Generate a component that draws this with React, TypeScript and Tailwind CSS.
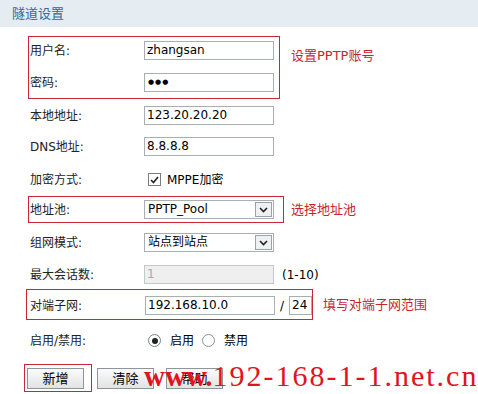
import React from "react";

const font = { fontFamily: '"DejaVu Sans", "Noto Sans CJK SC", sans-serif' };

function TextInput({ value, className = "" }: { value: string; className?: string }) {
  return (
    <div
      className={`h-[19px] w-[130px] border border-[#a9aeb3] bg-white pl-[2px] text-[12px] leading-[17px] text-black ${className}`}
    >
      {value}
    </div>
  );
}

function Select({ value }: { value: string }) {
  return (
    <div className="flex h-[19px] w-[130px] items-center justify-between border border-[#a9aeb3] bg-white pl-[3px] text-[12px] leading-[17px] text-black">
      <span>{value}</span>
      <div className="mr-[1px] flex h-[15px] w-[17px] items-center justify-center border border-[#9aa3ab] bg-[#eef0f2]">
        <svg width="9" height="6" viewBox="0 0 9 6">
          <path d="M1 1 L4.5 4.5 L8 1" fill="none" stroke="#222" strokeWidth="1.6" />
        </svg>
      </div>
    </div>
  );
}

function Label({ children, w = "w-[115px]" }: { children: React.ReactNode; w?: string }) {
  return <div className={`${w} shrink-0 text-[12px] text-[#222]`}>{children}</div>;
}

function Note({ children }: { children: React.ReactNode }) {
  return <div className="text-[13px] text-[#c8242f]">{children}</div>;
}

function Button({ children }: { children: React.ReactNode }) {
  return (
    <div className="flex h-[21px] w-[57px] items-center justify-center border border-[#8d949a] bg-gradient-to-b from-[#fbfbfb] to-[#e3e3e3] text-[13px] text-black">
      {children}
    </div>
  );
}

export default function App() {
  return (
    <div className="relative h-[394px] w-[478px] overflow-hidden bg-white" style={font}>
      {/* header */}
      <div className="flex h-[27px] items-center bg-[#e5ecf2] pl-[12px] text-[13px] text-[#2f6a9c]">
        隧道设置
      </div>

      {/* account box */}
      <div className="mt-[9px] flex items-center">
        <div className="ml-[28px] flex w-[252px] flex-col gap-[13px] border border-[#c8273a] pt-[4px] pb-[6px]">
          <div className="flex h-[19px] items-center pl-[1px]">
            <Label w="w-[114px]">用户名:</Label>
            <TextInput value="zhangsan" />
          </div>
          <div className="flex h-[19px] items-center pl-[1px]">
            <Label w="w-[114px]">密码:</Label>
            <TextInput value="●●●" className="pl-[3px] !text-[7px] !leading-[17px] tracking-[1px]" />
          </div>
        </div>
        <div className="ml-[11px] -mt-[24px]">
          <Note>设置PPTP账号</Note>
        </div>
      </div>

      <div className="ml-[30px] mt-[7px] flex h-[19px] items-center">
        <Label w="w-[114px]">本地地址:</Label>
        <TextInput value="123.20.20.20" />
      </div>
      <div className="ml-[30px] mt-[12px] flex h-[19px] items-center">
        <Label w="w-[114px]">DNS地址:</Label>
        <TextInput value="8.8.8.8" />
      </div>
      <div className="ml-[30px] mt-[14px] flex h-[19px] items-center">
        <Label w="w-[114px]">加密方式:</Label>
        <div className="ml-[4px] flex items-center gap-[6px] text-[12px] text-black">
          <div className="flex h-[13px] w-[13px] items-center justify-center border border-[#7a7f85] bg-white">
            <svg width="9" height="8" viewBox="0 0 9 8">
              <path d="M1 4 L3.5 6.5 L8 1" fill="none" stroke="#222" strokeWidth="1.6" />
            </svg>
          </div>
          <span>MPPE加密</span>
        </div>
      </div>

      {/* pool box */}
      <div className="mt-[7px] flex items-center">
        <div className="ml-[28px] flex w-[256px] items-center border border-[#c8273a] pt-[3px] pb-[3px] pl-[1px]">
          <Label w="w-[114px]">地址池:</Label>
          <Select value="PPTP_Pool" />
        </div>
        <div className="ml-[7px]">
          <Note>选择地址池</Note>
        </div>
      </div>

      <div className="ml-[30px] mt-[10px] flex h-[19px] items-center">
        <Label w="w-[114px]">组网模式:</Label>
        <Select value="站点到站点" />
      </div>
      <div className="ml-[30px] mt-[13px] flex h-[19px] items-center">
        <Label w="w-[114px]">最大会话数:</Label>
        <TextInput value="1" className="!border-[#c4c8cc] !bg-[#efefef] !text-[#a8a8a8]" />
        <span className="ml-[8px] text-[12px] text-black">(1-10)</span>
      </div>

      {/* subnet box */}
      <div className="mt-[5px] flex items-center">
        <div className="ml-[26px] flex w-[287px] items-center border border-[#c8273a] pt-[6px] pb-[4px] pl-[3px]">
          <Label w="w-[115px]">对端子网:</Label>
          <TextInput value="192.168.10.0" />
          <span className="ml-[5px] text-[12px] text-black">/</span>
          <TextInput value="24" className="ml-[5px] !w-[23px]" />
        </div>
        <div className="ml-[10px]">
          <Note>填写对端子网范围</Note>
        </div>
      </div>

      <div className="ml-[30px] mt-[11px] flex h-[19px] items-center text-[12px] text-black">
        <Label w="w-[114px]">启用/禁用:</Label>
        <div className="ml-[4px] flex items-center">
          <div className="flex h-[13px] w-[13px] items-center justify-center rounded-full border border-[#7a7f85] bg-white">
            <div className="h-[6px] w-[6px] rounded-full bg-[#222]" />
          </div>
          <span className="ml-[9px]">启用</span>
          <div className="ml-[8px] h-[13px] w-[13px] rounded-full border border-[#8a8f95] bg-white" />
          <span className="ml-[9px]">禁用</span>
        </div>
      </div>

      {/* buttons */}
      <div className="mt-[14px] flex items-start">
        <div className="ml-[24px] h-[28px] w-[68px] border border-[#c8273a] pl-[2px] pt-[3px]">
          <Button>新增</Button>
        </div>
        <div className="ml-[5px] mt-[4px]">
          <Button>清除</Button>
        </div>
        <div className="ml-[12px] mt-[4px]">
          <Button>帮助</Button>
        </div>
      </div>

      {/* watermark */}
      <div
        className="absolute left-[144px] top-[361px] whitespace-nowrap text-[#e0141e] leading-none"
        style={{ fontFamily: '"Liberation Serif", serif' }}
      >
        <span className="text-[29px] font-bold">www.</span>
        <span className="text-[30px] tracking-[2px]">192-168-1-1.net.cn</span>
      </div>
    </div>
  );
}
